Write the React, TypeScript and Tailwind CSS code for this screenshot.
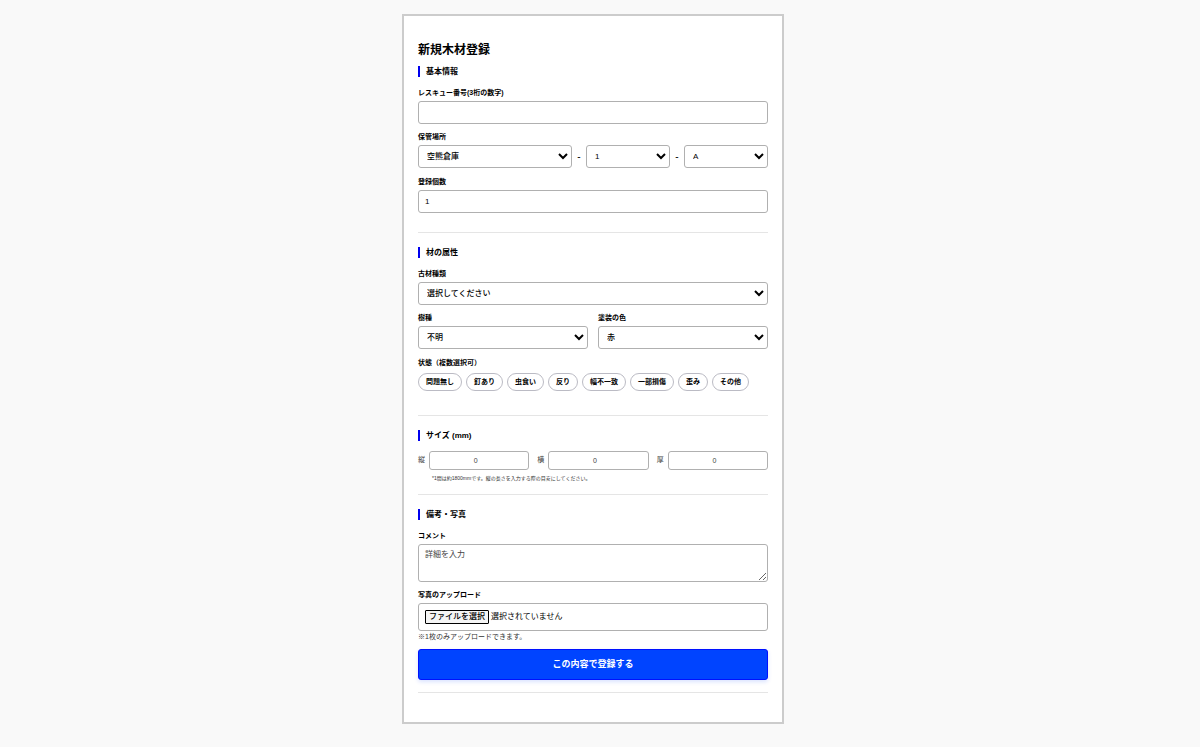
import { useState } from 'react';
import type { ReactNode } from 'react';

const controlClass =
  'block w-full h-[23px] rounded-[3px] border border-[#b0b0b0] bg-white text-[8px] font-medium text-black';

const conditions = ['問題無し', '釘あり', '虫食い', '反り', '幅不一致', '一部損傷', '歪み', 'その他'];

const dimensions = [
  { id: 'height', label: '縦' },
  { id: 'width', label: '横' },
  { id: 'thickness', label: '厚' },
];

function Section({ title, children }: { title: string; children: ReactNode }) {
  return (
    <section className="border-b border-[#e5e5e5] mb-3.5 last:mb-0">
      <h2 className="border-l-2 border-[#0000ee] pl-1.5 mb-2.5 text-[8px] leading-[11px] font-bold">
        {title}
      </h2>
      {children}
    </section>
  );
}

function FieldLabel({ htmlFor, children }: { htmlFor?: string; children: ReactNode }) {
  return (
    <label htmlFor={htmlFor} className="block mb-[3px] text-[7px] leading-[11px] font-bold">
      {children}
    </label>
  );
}

function Select({ id, label, options }: { id: string; label?: string; options: string[] }) {
  return (
    <select id={id} aria-label={label} className={`${controlClass} px-1`}>
      {options.map((option) => (
        <option key={option}>{option}</option>
      ))}
    </select>
  );
}

export default function App() {
  const [checked, setChecked] = useState<string[]>([]);
  const [fileName, setFileName] = useState('');

  const toggle = (name: string) => {
    setChecked((prev) => (prev.includes(name) ? prev.filter((c) => c !== name) : [...prev, name]));
  };

  return (
    <div
      lang="ja"
      className="min-h-screen bg-[#f9f9f9] py-3.5 pr-3.5 font-['Liberation_Sans','Noto_Sans_CJK_JP',sans-serif] text-black"
    >
      <main className="mx-auto w-full max-w-[382px] border-2 border-[#ccc] bg-white px-3.5 pt-[25px] pb-[29px]">
        <h1 className="mb-[7px] text-[12px] leading-[18px] font-bold">新規木材登録</h1>

        <form onSubmit={(e) => e.preventDefault()}>
          <Section title="基本情報">
            <div className="flex flex-col gap-[7px] pb-[19px]">
              <div>
                <FieldLabel htmlFor="rescue">レスキュー番号(3桁の数字)</FieldLabel>
                <input id="rescue" type="text" className={`${controlClass} px-1.5`} />
              </div>
              <div className="pb-px">
                <FieldLabel htmlFor="warehouse">保管場所</FieldLabel>
                <div className="grid grid-cols-[11fr_14px_6fr_14px_6fr] items-center text-center text-[10px] leading-3 font-medium">
                  <Select id="warehouse" options={['空熊倉庫']} />
                  <span>-</span>
                  <Select id="shelf" label="棚番号" options={['1', '2', '3']} />
                  <span>-</span>
                  <Select id="row" label="段" options={['A', 'B', 'C']} />
                </div>
              </div>
              <div>
                <FieldLabel htmlFor="count">登録個数</FieldLabel>
                <input id="count" type="number" defaultValue="1" className={`${controlClass} px-1.5`} />
              </div>
            </div>
          </Section>

          <Section title="材の属性">
            <div className="flex flex-col gap-[7px] pb-6">
              <div>
                <FieldLabel htmlFor="kind">古材種類</FieldLabel>
                <Select id="kind" options={['選択してください']} />
              </div>
              <div className="grid grid-cols-2 gap-2.5 pb-px">
                <div>
                  <FieldLabel htmlFor="species">樹種</FieldLabel>
                  <Select id="species" options={['不明']} />
                </div>
                <div>
                  <FieldLabel htmlFor="color">塗装の色</FieldLabel>
                  <Select id="color" options={['赤']} />
                </div>
              </div>
              <fieldset>
                <legend className="mb-[5px] text-[7px] leading-[11px] font-bold">状態（複数選択可）</legend>
                <div className="flex flex-wrap gap-1">
                  {conditions.map((name) => (
                    <label
                      key={name}
                      className="relative flex h-[18px] cursor-pointer items-center rounded-full border border-[#bbbbc4] px-[7px] text-[7px] font-bold has-checked:bg-blue-100"
                    >
                      <input
                        type="checkbox"
                        className="sr-only"
                        checked={checked.includes(name)}
                        onChange={() => toggle(name)}
                      />
                      {name}
                    </label>
                  ))}
                </div>
              </fieldset>
            </div>
          </Section>

          <Section title="サイズ (mm)">
            <div className="grid grid-cols-3 gap-2">
              {dimensions.map((d) => (
                <div key={d.id} className="flex items-center gap-1">
                  <label htmlFor={d.id} className="text-[7px] text-[#444]">
                    {d.label}
                  </label>
                  <input
                    id={d.id}
                    type="number"
                    placeholder="0"
                    className="h-[19px] w-full min-w-0 flex-1 rounded-[3px] border border-[#b0b0b0] bg-white pl-2 text-center text-[7px] placeholder:text-[#444]"
                  />
                </div>
              ))}
            </div>
            <p className="pt-1 pb-[11px] pl-3.5 text-[5px] leading-[9px] text-[#333]">
              *1間は約1800mmです。縦の長さを入力する際の目安にしてください。
            </p>
          </Section>

          <Section title="備考・写真">
            <div className="flex flex-col gap-[7px] pb-3">
              <div>
                <FieldLabel htmlFor="comment">コメント</FieldLabel>
                <textarea
                  id="comment"
                  placeholder="詳細を入力"
                  className="block h-[38px] w-full rounded-[3px] border border-[#b0b0b0] bg-white px-1.5 py-1 text-[8px] leading-3 placeholder:text-[#444]"
                />
              </div>
              <div>
                <FieldLabel htmlFor="photo">写真のアップロード</FieldLabel>
                <label className="relative flex h-7 w-full cursor-pointer items-center gap-0.5 rounded-[3px] border border-[#b0b0b0] bg-white px-1.5 text-[8px]">
                  <input
                    id="photo"
                    type="file"
                    accept="image/*"
                    className="sr-only"
                    onChange={(e) => setFileName(e.target.files?.[0]?.name ?? '')}
                  />
                  <span className="rounded-[1px] border border-black bg-[#f5f5f5] px-[3px] leading-3 font-medium">
                    ファイルを選択
                  </span>
                  <span>{fileName || '選択されていません'}</span>
                </label>
                <p className="pt-px text-[7px] leading-[10px] text-[#333]">※1枚のみアップロードできます。</p>
              </div>
              <button
                type="submit"
                className="h-[31px] w-full rounded-[3px] border border-[#0011ff] bg-[#0044ff] text-[9px] font-bold text-white shadow-[0_2px_4px_rgba(0,68,255,0.15)]"
              >
                この内容で登録する
              </button>
            </div>
          </Section>
        </form>
      </main>
    </div>
  );
}
